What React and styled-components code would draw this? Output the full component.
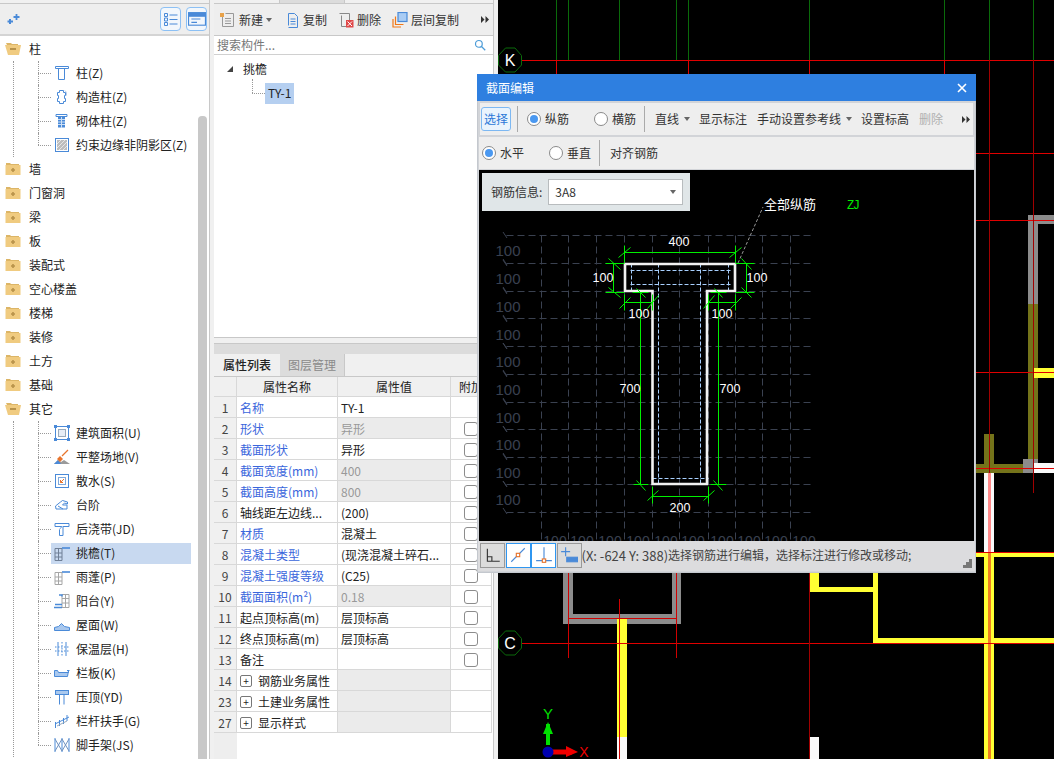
import React from "react";
import styled, { createGlobalStyle } from "styled-components";

const GlobalStyle = createGlobalStyle`
  html, body {
    margin: 0;
    padding: 0;
    background: #f0f0f0;
  }
  * {
    box-sizing: border-box;
  }
`;

const BLUE = "#4a8ad8";
const FONT = `"Noto Sans CJK SC", "Liberation Sans", sans-serif`;

const Page = styled.div`
  position: relative;
  display: flex;
  width: 1054px;
  height: 759px;
  overflow: hidden;
  background: #f0f0f0;
  color: #222;
  font: 12px/1 ${FONT};
`;

/* ---------- left tree ---------- */

const TreePanel = styled.div`
  display: flex;
  flex-direction: column;
  width: 210px;
  margin-right: 4px;
  border-right: 1px solid #c8c8c8;
  background: #fff;
`;

const TreeTop = styled.div`
  height: 4px;
  flex: none;
  background: #f0f0f0;
  border-bottom: 1px solid #c8c8c8;
`;

const TreeBar = styled.div`
  display: flex;
  align-items: center;
  height: 32px;
  flex: none;
  padding: 0 2px 0 7px;
  gap: 5px;
  background: #eeeeee;
  border-bottom: 2px solid #d4d4d4;
`;

const BarSpacer = styled.div`
  flex: 1;
`;

const ModeButton = styled.div`
  display: flex;
  align-items: center;
  justify-content: center;
  width: 21px;
  height: 24px;
  border: 1px solid #8cc0f4;
  border-radius: 4px;
  background: #f2f7fc;
`;

const TreeBody = styled.div`
  display: flex;
  flex: 1;
  min-height: 0;
`;

const TreeList = styled.div`
  flex: 1;
  padding-top: 1px;
  overflow: hidden;
`;

const ScrollTrack = styled.div`
  flex: none;
  width: 9px;
  margin-right: 2px;
  padding-top: 80px;
`;

const ScrollThumb = styled.div`
  height: 100%;
  border-radius: 4px 4px 0 0;
  background: #c8c8c8;
`;

const FolderRow = styled.div`
  display: flex;
  align-items: center;
  height: 24px;
  padding-left: 5px;
  gap: 8px;
`;

const ChildGroup = styled.div`
  margin-left: 13px;
  border-left: 1px dotted #999;
`;

const ChildRow = styled.div`
  position: relative;
  display: flex;
  align-items: center;
  height: 24px;
  padding-left: 24px;

  &::before {
    content: "";
    position: absolute;
    left: 24px;
    top: 0;
    height: ${(p) => (p.$last ? "12px" : "24px")};
    border-left: 1px dotted #999;
  }
`;

const Connector = styled.span`
  flex: none;
  width: 13px;
  border-top: 1px dotted #999;
`;

const ChildItem = styled.div`
  display: flex;
  align-items: center;
  width: 140px;
  height: 21px;
  padding-left: 3px;
  gap: 6px;
  background: ${(p) => (p.$selected ? "#c8d9f0" : "transparent")};
`;

/* ---------- middle column ---------- */

const MiddlePanel = styled.div`
  display: flex;
  flex-direction: column;
  width: 280px;
  margin-right: 4px;
  border-right: 1px solid #c8c8c8;
`;

const ClippedTabs = styled.div`
  display: flex;
  flex: none;
  height: 4px;
  border-bottom: 1px solid #c8c8c8;
`;

const ClippedTab = styled.div`
  width: ${(p) => p.$w}px;
  background: ${(p) => p.$bg};
  border-right: 1px solid #c8c8c8;
`;

const ComponentPane = styled.div`
  display: flex;
  flex-direction: column;
  height: 334px;
  flex: none;
  background: #fff;
  border-bottom: 1px solid #c8c8c8;
`;

const ComponentBar = styled.div`
  display: flex;
  align-items: center;
  height: 32px;
  flex: none;
  padding: 0 6px;
  background: #eeeeee;
  border-bottom: 1px solid #c8c8c8;
  color: #333;
`;

const BarAction = styled.div`
  display: flex;
  align-items: center;
  flex: none;
  white-space: nowrap;
  gap: ${(p) => p.$gap ?? 3}px;
  margin-right: ${(p) => p.$mr ?? 0}px;
`;

const SearchRow = styled.div`
  display: flex;
  align-items: center;
  justify-content: space-between;
  height: 19px;
  flex: none;
  padding: 0 7px 0 3px;
  color: #777;
  border-bottom: 1px solid #d0d0d0;
`;

const ComponentTree = styled.div`
  padding: 4px 0 0 12px;
`;

const RootNode = styled.div`
  display: flex;
  align-items: center;
  height: 20px;
  gap: 9px;
`;

const LeafNode = styled.div`
  position: relative;
  display: flex;
  align-items: center;
  height: 22px;
  margin-top: 3px;
  padding-left: 26px;

  &::before {
    content: "";
    position: absolute;
    left: 26px;
    top: -3px;
    height: 14px;
    border-left: 1px dotted #999;
  }
`;

const LeafLabel = styled.span`
  display: flex;
  align-items: center;
  height: 21px;
  padding: 0 3px;
  background: #b5cff0;
`;

const PaneGap = styled.div`
  height: 5px;
  flex: none;
`;

const PaneGrip = styled.div`
  height: 11px;
  flex: none;
  background: #dcdcdc;
  border-top: 1px solid #c8c8c8;
`;

const PropsPane = styled.div`
  display: flex;
  flex: 1;
  flex-direction: column;
  min-height: 0;
  background: #fff;
`;

const TabStrip = styled.div`
  display: flex;
  height: 23px;
  flex: none;
  background: #f0f0f0;
  border-bottom: 1px solid #c8c8c8;
`;

const Tab = styled.div`
  display: flex;
  align-items: center;
  justify-content: center;
  width: ${(p) => (p.$active ? 66 : 65)}px;
  font-weight: ${(p) => (p.$active ? 500 : 400)};
  color: ${(p) => (p.$active ? "#222" : "#8a8a8a")};
  background: ${(p) => (p.$active ? "#f0f0f0" : "#dcdcdc")};
  border-right: ${(p) => (p.$active ? "none" : "1px solid #c8c8c8")};
`;

const GridRow = styled.div`
  display: grid;
  grid-template-columns: 23px 101px 113px 41px;
  height: ${(p) => (p.$head ? 20 : 21)}px;
  flex: none;
`;

const Cell = styled.div`
  display: flex;
  align-items: center;
  min-width: 0;
  padding: 1px ${(p) => (p.$center ? 0 : "3px")} 0;
  justify-content: ${(p) => (p.$center ? "center" : "flex-start")};
  border-right: 1px solid #d8d8d8;
  border-bottom: 1px solid #d8d8d8;
  white-space: nowrap;
  overflow: hidden;
  color: ${(p) => p.$color || "#222"};
  background: ${(p) => p.$bg || "#fff"};
`;

const Check = styled.span`
  width: 14px;
  height: 14px;
  border: 1px solid #8c8c8c;
  border-radius: 3px;
  background: #fff;
`;

const Expander = styled.span`
  display: inline-flex;
  align-items: center;
  justify-content: center;
  flex: none;
  width: 12px;
  height: 12px;
  margin-right: 6px;
  border: 1px solid #777;
  border-radius: 2px;
  font-size: 10px;
`;

const TableFill = styled.div`
  flex: 1;
  width: 23px;
  background: #eeeeee;
`;

/* ---------- cad view ---------- */

const CadView = styled.div`
  flex: 1;
  background: #000;
`;

const CadSvg = styled.svg`
  display: block;
`;

/* ---------- section editor dialog ---------- */

const Dialog = styled.div`
  position: absolute;
  left: 477px;
  top: 74px;
  display: flex;
  flex-direction: column;
  width: 499px;
  height: 499px;
  background: #d2d4d8;
  border: 1px solid #c4c8ce;
  border-top: none;
`;

const TitleBar = styled.div`
  display: flex;
  align-items: center;
  justify-content: space-between;
  height: 27px;
  flex: none;
  margin: 0 -1px;
  padding: 0 9px 0 9px;
  background: #2e7fe0;
  color: #fff;
`;

const DialogBar = styled.div`
  display: flex;
  align-items: center;
  height: 32px;
  flex: none;
  margin: ${(p) => (p.$first ? "2px 2px 0" : "2px 1px 1px")};
  padding-left: ${(p) => (p.$first ? 1 : 3)}px;
  background: #eeeeee;
  color: #333;
`;

const SelectButton = styled.div`
  display: flex;
  align-items: center;
  justify-content: center;
  width: 30px;
  height: 24px;
  border: 1px solid #7db8f2;
  border-radius: 3px;
  background: #eaf4fd;
  color: #2a78d8;
`;

const BarSep = styled.div`
  flex: none;
  width: 1px;
  height: 26px;
  margin: 0 ${(p) => p.$r ?? 10}px 0 ${(p) => p.$l ?? 6}px;
  background: #aaa;
`;

const RadioItem = styled.div`
  display: flex;
  align-items: center;
  flex: none;
  gap: 4px;
  width: ${(p) => p.$w}px;
`;

const Radio = styled.span`
  display: flex;
  align-items: center;
  justify-content: center;
  flex: none;
  width: 14px;
  height: 14px;
  border: 1px solid #8a8a8a;
  border-radius: 50%;
  background: #fff;

  &::after {
    content: "";
    width: 8px;
    height: 8px;
    border-radius: 50%;
    background: ${(p) => (p.$on ? "#4a98f0" : "transparent")};
  }
`;

const BarItem = styled.div`
  display: flex;
  align-items: center;
  flex: none;
  gap: 5px;
  width: ${(p) => p.$w}px;
  color: ${(p) => (p.$off ? "#b0b0b0" : "inherit")};
`;

const Caret = styled.span`
  flex: none;
  width: 0;
  height: 0;
  border: 3px solid transparent;
  border-top: 4px solid #666;
  border-bottom: none;
`;

const Sketch = styled.div`
  position: relative;
  flex: 1;
  min-height: 0;
  margin: 0 1px;
  background: #000;
  overflow: hidden;
`;

const RebarInfo = styled.div`
  position: absolute;
  left: 3px;
  top: 3px;
  display: flex;
  align-items: center;
  width: 208px;
  height: 38px;
  padding-left: 9px;
  gap: 6px;
  background: #e0e6e8;
  color: #333;
`;

const RebarSelect = styled.div`
  display: flex;
  align-items: center;
  justify-content: space-between;
  width: 135px;
  height: 26px;
  padding: 0 6px;
  background: #fff;
  border: 1px solid #b8bcbe;
`;

const StatusBar = styled.div`
  display: flex;
  align-items: center;
  position: relative;
  height: 30px;
  flex: none;
  margin-bottom: 1px;
  padding: 0 0 2px 2px;
  background: #dcdcde;
  color: #444;
  white-space: nowrap;
`;

const SnapButton = styled.div`
  display: flex;
  align-items: center;
  justify-content: center;
  flex: none;
  width: 25px;
  height: 25px;
  margin-right: ${(p) => (p.$last ? 0 : 0.5)}px;
  border: 1px solid ${(p) => (p.$on ? "#2f96f0" : "#999")};
  background: ${(p) => (p.$on ? "#fff" : "#dcdcdc")};
`;

const Coords = styled.span`
  font-size: 13px;
`;

const Grip = styled.svg`
  position: absolute;
  right: 3px;
  bottom: 3px;
`;

/* ---------- icons ---------- */

const Icon = ({ children, size = 16, fill = "none", stroke = BLUE, width = 1 }) => (
  <svg width={size} height={size} viewBox="0 0 16 16" fill={fill} stroke={stroke} strokeWidth={width} style={{ flex: "none" }}>
    {children}
  </svg>
);

const FolderIcon = ({ open }) => (
  <svg width="16" height="14" viewBox="0 0 16 14" style={{ flex: "none" }}>
    {open ? (
      <>
        <path d="M1 1h5l1 1h6v2H4L3 5z" fill="#dcb566" />
        <path d="M0 3h15l1 0-2 10H3z" fill="#f0cb80" />
        <rect x="5" y="6" width="6" height="2" fill="#b8924a" />
      </>
    ) : (
      <>
        <path d="M1 1h4l1 1h8v2H1z" fill="#dcb566" />
        <rect x="0.5" y="3" width="15" height="10" fill="#f0cb80" />
        <path d="M6 8h4M8 6v4" stroke="#b8924a" strokeWidth="1.6" />
      </>
    )}
  </svg>
);

const TREE_ICONS = {
  column: (
    <Icon>
      <path d="M1.5 1.5h13v2h-13zM4.5 3.5h6v11h-6z" />
    </Icon>
  ),
  constructive: (
    <Icon>
      <path d="M5.5 1.5h4v2h2v3h-1v3h1v3h-2v2h-4v-2h-2v-3h1v-3h-1v-3h2z" />
      <path d="M11 1.5l1.5 2v3" stroke="#b8cde8" />
    </Icon>
  ),
  masonry: (
    <Icon>
      <path d="M2 1.5h11v2H2z" />
      <rect x="4" y="4" width="7" height="10.5" fill="#4a8ad8" stroke="none" />
      <path d="M4 6.5h7M4 9h7M4 11.5h7M7.5 4v11" stroke="#cfe0f4" />
    </Icon>
  ),
  shaded: (
    <Icon>
      <rect x="1.5" y="1.5" width="13" height="13" />
      <rect x="3" y="3" width="10" height="10" fill="#bdbdbd" stroke="none" />
      <path d="M3 7l4-4M3 11l8-8M5 13l8-8M9 13l4-4" stroke="#e6e6e6" />
    </Icon>
  ),
  area: (
    <Icon>
      <rect x="1.5" y="1.5" width="13" height="13" />
      <rect x="4.5" y="4.5" width="7" height="7" stroke="#9ab" fill="#e6edf6" />
      <path d="M0 0h3v3H0zM13 0h3v3h-3zM0 13h3v3H0zM13 13h3v3h-3z" fill="#4a8ad8" stroke="none" />
    </Icon>
  ),
  site: (
    <Icon>
      <path d="M0 15l4-4 3 2 3-2 6 4z" fill="#9a9a9a" stroke="none" />
      <path d="M0 15l4-4 3 4z" fill="#4a8ad8" stroke="none" />
      <path d="M6 7l3 3-3 3-3-3z" fill="#e8742c" stroke="none" />
      <path d="M8 7l6-6" stroke="#e8742c" strokeWidth="1.3" />
    </Icon>
  ),
  apron: (
    <Icon>
      <rect x="1.5" y="1.5" width="13" height="13" />
      <rect x="4.5" y="4.5" width="7" height="7" stroke="#7fa9dc" />
      <path d="M10 6L6.5 9.5M6.5 7v2.5H9" stroke="#e8742c" />
    </Icon>
  ),
  steps: (
    <Icon>
      <path d="M1.5 9l5-4 2-1.5 5 1.5v2l-3-1-2 2 4.5 0v4h-11z" />
      <path d="M4 9l5 3" />
    </Icon>
  ),
  pour: (
    <Icon>
      <path d="M1 2.5h14v3H9v9H5.5v-6L8 5.5H1z" />
      <path d="M5.5 8.5L8 5.5" stroke="#a9c6ea" />
    </Icon>
  ),
  eave: (
    <Icon stroke="#6f7f96">
      <path d="M1 3.5h7v12H1zM1 8h7M1 12h7M4.500 3.500v12" />
      <path d="M8 3h8" stroke={BLUE} strokeWidth="1.6" />
    </Icon>
  ),
  canopy: (
    <Icon stroke="#a6a6a6">
      <path d="M1 3.5h7v12H1zM1 8h7M1 12h7M4.500 3.500v12" />
      <path d="M8 3h8" stroke={BLUE} strokeWidth="1.6" />
    </Icon>
  ),
  balcony: (
    <Icon stroke="#a6a6a6">
      <path d="M8 1.5h7v13H8zM8 5.5h7M8 10h7M11.5 1.5v13" />
      <path d="M5 2h3v1.5M0 14.5h8M1 11.5h7" stroke={BLUE} strokeWidth="1.4" />
    </Icon>
  ),
  roof: (
    <Icon>
      <path d="M0.5 13.5v-3l4-1 3-3 3 3 5 1v3z" fill="#a9c8ee" />
    </Icon>
  ),
  insulation: (
    <Icon>
      <path d="M4 1v14M12 1v14" />
      <path d="M8 1v14M1 6h14M1 10h14" strokeDasharray="1.5 1.5" />
    </Icon>
  ),
  parapet: (
    <Icon>
      <path d="M0.5 5.5h3l1 2h10v-2l-1 6h-13z" fill="#a9c8ee" />
      <path d="M13 5.5h2.5" />
    </Icon>
  ),
  coping: (
    <Icon>
      <rect x="1.5" y="1.5" width="13" height="4" fill="#a9c8ee" />
      <path d="M5.5 5.5v10M10 5.5v10" />
    </Icon>
  ),
  railing: (
    <Icon>
      <path d="M1 11l14-7M1.5 9v6M5.5 7v6M9.5 5v6M13 2v6" />
      <path d="M3 13l10-5" stroke="#9ab" />
    </Icon>
  ),
  scaffold: (
    <Icon>
      <path d="M1 1v14M15 1v14M8 1v14" />
      <path d="M1 2l7 12M8 2l7 12M8 2L1 14M15 2L8 14" stroke="#6f92c0" />
    </Icon>
  ),
};

const TREE = [
  {
    name: "柱",
    items: [
      ["column", "柱(Z)"],
      ["constructive", "构造柱(Z)"],
      ["masonry", "砌体柱(Z)"],
      ["shaded", "约束边缘非阴影区(Z)"],
    ],
  },
  { name: "墙" },
  { name: "门窗洞" },
  { name: "梁" },
  { name: "板" },
  { name: "装配式" },
  { name: "空心楼盖" },
  { name: "楼梯" },
  { name: "装修" },
  { name: "土方" },
  { name: "基础" },
  {
    name: "其它",
    items: [
      ["area", "建筑面积(U)"],
      ["site", "平整场地(V)"],
      ["apron", "散水(S)"],
      ["steps", "台阶"],
      ["pour", "后浇带(JD)"],
      ["eave", "挑檐(T)", true],
      ["canopy", "雨蓬(P)"],
      ["balcony", "阳台(Y)"],
      ["roof", "屋面(W)"],
      ["insulation", "保温层(H)"],
      ["parapet", "栏板(K)"],
      ["coping", "压顶(YD)"],
      ["railing", "栏杆扶手(G)"],
      ["scaffold", "脚手架(JS)"],
    ],
  },
];

const PROPS = [
  { n: 1, name: "名称", value: "TY-1", blue: true, noCheck: true },
  { n: 2, name: "形状", value: "异形", blue: true, locked: true },
  { n: 3, name: "截面形状", value: "异形", blue: true },
  { n: 4, name: "截面宽度(mm)", value: "400", blue: true, locked: true },
  { n: 5, name: "截面高度(mm)", value: "800", blue: true, locked: true },
  { n: 6, name: "轴线距左边线...", value: "(200)" },
  { n: 7, name: "材质", value: "混凝土", blue: true },
  { n: 8, name: "混凝土类型", value: "(现浇混凝土碎石...", blue: true },
  { n: 9, name: "混凝土强度等级", value: "(C25)", blue: true },
  { n: 10, name: "截面面积(m²)", value: "0.18", blue: true, locked: true },
  { n: 11, name: "起点顶标高(m)", value: "层顶标高" },
  { n: 12, name: "终点顶标高(m)", value: "层顶标高" },
  { n: 13, name: "备注", value: "" },
  { n: 14, name: "钢筋业务属性", group: true },
  { n: 23, name: "土建业务属性", group: true },
  { n: 27, name: "显示样式", group: true },
];

/* ---------- cad drawings ---------- */

const RED = "#e00000";
const DARK_RED = "#a00000";
const CAD_GREEN = "#0a6a0a";

const AxisBubble = ({ cx, cy, label }) => (
  <g>
    <polygon
      points={`${cx - 11.5},${cy - 4.5} ${cx - 4.5},${cy - 12} ${cx + 5},${cy - 12} ${cx + 11.5},${cy - 4.5} ${cx + 11.5},${cy + 5} ${cx + 5},${cy + 12} ${cx - 4.5},${cy + 12} ${cx - 11.5},${cy + 5}`}
      fill="none"
      stroke={CAD_GREEN}
    />
    <text x={cx} y={cy + 6} fill="#fff" fontSize="16" textAnchor="middle" fontFamily="Liberation Sans, sans-serif">
      {label}
    </text>
  </g>
);

const Wall = ({ x, y, w, h, fill }) => <rect x={x} y={y} width={w} height={h} fill={fill} />;

const GREY = "#8c8c8c";
const OLIVE = "#74731a";
const YELLOW = "#ffff33";

const CadDrawing = () => (
  <CadSvg width="556" height="759" viewBox="498 0 556 759" shapeRendering="crispEdges">
    {/* green axis stubs above the K line */}
    {[556, 568, 619, 676, 688, 809, 944, 989, 1033].map((x) => (
      <path key={x} d={`M${x + 0.5} 0V60`} stroke={CAD_GREEN} />
    ))}

    {/* walls, right side */}
    <Wall x={1028} y={215} w={26} h={9} fill={GREY} />
    <Wall x={1028} y={215} w={10} h={89} fill={GREY} />
    <Wall x={1028} y={304} w={10} h={155} fill={OLIVE} />
    <Wall x={984} y={434} w={10} h={30} fill={OLIVE} />
    <Wall x={976} y={464} w={47} h={9} fill={OLIVE} />
    <Wall x={1023} y={459} w={15} h={14} fill={GREY} />
    <Wall x={1034} y={368} w={20} h={10} fill={YELLOW} />
    <Wall x={1034} y={463} w={20} h={10} fill="#fafafa" />
    <Wall x={984} y={473} w={10} h={80} fill="#fafafa" />
    <Wall x={988} y={473} w={3} h={80} fill="#ff8a8a" />

    {/* yellow walls, bottom right */}
    <Wall x={976} y={553} w={78} h={4} fill={YELLOW} />
    <Wall x={984} y={553} w={10} h={206} fill={YELLOW} />
    <Wall x={988} y={553} w={3} h={206} fill="#f08020" />
    <Wall x={809} y={573} w={10} h={18} fill={YELLOW} />
    <Wall x={809} y={587} w={66} h={5} fill={YELLOW} />
    <Wall x={873} y={573} w={5} h={70} fill={YELLOW} />
    <Wall x={873} y={638} w={111} h={5} fill={YELLOW} />
    <Wall x={994} y={638} w={60} h={5} fill={YELLOW} />
    <Wall x={809} y={737} w={10} h={22} fill="#fafafa" />

    {/* grey U and the wall below */}
    <Wall x={563} y={570} w={10} h={54} fill={GREY} />
    <Wall x={672} y={570} w={9} h={54} fill={GREY} />
    <Wall x={563} y={614} w={118} h={10} fill={GREY} />
    <Wall x={617} y={619} w={10} h={118} fill={YELLOW} />
    <Wall x={617} y={737} w={10} h={22} fill="#fafafa" />

    {/* red axes */}
    <path d="M522 60.5H1054M976 153.5H1054M976 220.5H1054M976 372.500H1054M976 468.500H1054M976 552.500H1054M522 643.500H1054" stroke={RED} />
    <path d="M556.500 60V74M688.500 60V74M809.500 60V74M944.500 60V74" stroke={RED} />
    <path d="M989.500 60V473M1033.500 60V493M809.500 573V759" stroke={DARK_RED} />
    <path d="M568.500 570V658M676.500 570V658M568 618.500H676M619.500 599V759" stroke="#d00000" />

    <g shapeRendering="auto">
      <AxisBubble cx={510} cy={60} label="K" />
      <AxisBubble cx={510} cy={643} label="C" />

      {/* coordinate axes */}
      <path d="M548 745V724" stroke="#00e000" strokeWidth="4" />
      <path d="M543 734L548 722L553 734Z" fill="#00e000" />
      <path d="M550 752H572" stroke="#f00000" strokeWidth="5" />
      <path d="M566 746L578 752L566 757Z" fill="#f00000" />
      <circle cx="548" cy="752" r="5.5" fill="#0000b0" />
      <text x="548" y="719" fill="#00e000" fontSize="15" textAnchor="middle" fontFamily="Liberation Sans, sans-serif">
        Y
      </text>
      <text x="584" y="757" fill="#f00000" fontSize="14" textAnchor="middle" fontFamily="Liberation Sans, sans-serif">
        X
      </text>
    </g>
  </CadSvg>
);

const GRID_Y = [235, 263, 291, 318, 346, 374, 402, 429, 457, 484, 512];
const GRID_X = [541, 568, 596, 624, 652, 679, 708, 735, 762, 790];
const LEFT_LABELS = [251, 279, 307, 335, 362, 390, 418, 445, 473, 500];
const GREEN = "#00f000";

// dimension lines as [x1, y1, x2, y2]
const DIMS = [
  [624, 252, 735, 252], [624, 245, 624, 262], [735, 245, 735, 262],
  [618, 257, 630, 247], [729, 257, 741, 247],
  [613, 263, 613, 292], [605, 263, 624, 263], [605, 292, 624, 292],
  [608, 258, 620, 269], [608, 287, 620, 297],
  [746, 263, 746, 292], [735, 263, 754, 263], [735, 292, 754, 292],
  [741, 258, 751, 269], [741, 287, 751, 297],
  [624, 302, 652, 302], [624, 294, 624, 310], [652, 294, 652, 310],
  [619, 308, 630, 297], [647, 308, 658, 295],
  [708, 302, 735, 302], [708, 294, 708, 310], [735, 294, 735, 310],
  [703, 308, 714, 295], [730, 308, 741, 297],
  [640, 292, 640, 484], [632, 292, 648, 292], [633, 484, 648, 484],
  [636, 288, 645, 297], [636, 480, 645, 490],
  [718, 292, 718, 484], [710, 292, 726, 292], [710, 484, 726, 484],
  [714, 288, 722, 297], [713, 480, 722, 490],
  [652, 496, 708, 496], [652, 486, 652, 503], [708, 486, 708, 503],
  [647, 500, 658, 490], [703, 500, 714, 490],
];

const DIM_LABELS = [
  ["400", 679, 246],
  ["100", 603, 282],
  ["100", 757, 282],
  ["100", 639, 318],
  ["100", 722, 318],
  ["700", 630, 393],
  ["700", 730, 393],
  ["200", 680, 512],
];

const SectionDrawing = () => (
  <svg width="495" height="371" viewBox="479 170 495 371" style={{ display: "block" }} fontFamily="Liberation Sans, sans-serif">
    <g transform="translate(0.5 0.5)">
      {GRID_Y.map((y) => (
        <path key={y} d={`M506 ${y}H814`} stroke="#3a4150" strokeDasharray="7 4" />
      ))}
      {GRID_X.map((x) => (
        <path key={x} d={`M${x} 235V541`} stroke="#3a4150" strokeDasharray="7 4" />
      ))}
    </g>
    {LEFT_LABELS.map((y) => (
      <g key={y}>
        <text x="508" y={y + 5} fill="#3a4150" fontSize="15" textAnchor="middle">
          100
        </text>
        <path d={`M503 ${y - 19}L507 ${y - 13}M503 ${y + 8}L507 ${y + 14}`} stroke="#3a4150" />
      </g>
    ))}
    {GRID_X.map((x) => (
      <text key={x} x={x + 14} y="546" fill="#3a4150" fontSize="14" textAnchor="middle">
        100
      </text>
    ))}

    {/* rebar outline */}
    <path
      transform="translate(0.5 0.5)"
      d="M658 263V484M700 263V484M631 263V292M728 263V292M630 270H731M630 284H731M652 478H708"
      stroke="#a8d0ff"
      strokeDasharray="4 2"
      fill="none"
    />
    {/* T section */}
    <path d="M625 264H735V291H707V484H652.5V291H625Z" fill="none" stroke="#f2f2f2" strokeWidth="2.6" />

    <g transform="translate(0.5 0.5)">
      {DIMS.map(([x1, y1, x2, y2]) => (
        <line key={`${x1}-${y1}-${x2}-${y2}`} x1={x1} y1={y1} x2={x2} y2={y2} stroke={GREEN} />
      ))}
    </g>
    {DIM_LABELS.map(([t, x, y]) => (
      <text key={`${x}-${y}`} x={x} y={y} fill="#fff" fontSize="12.5" textAnchor="middle">
        {t}
      </text>
    ))}

    <path d="M738 263L763 207" stroke="#999" strokeDasharray="3 2" />
    <text x="764" y="209" fill="#fff" fontSize="13" fontFamily={FONT}>
      全部纵筋
    </text>
    <text x="847" y="209" fill={GREEN} fontSize="12" fontFamily="Liberation Mono, monospace" textLength="13">
      ZJ
    </text>
  </svg>
);

const FastForward = () => (
  <svg width="8" height="7" viewBox="0 0 8 7" style={{ flex: "none" }}>
    <path d="M0 0l3.500 3.500L0 7zM4.500 0L8 3.500 4.500 7z" fill="#333" />
  </svg>
);

/* ---------- app ---------- */

const App = () => (
  <Page>
    <GlobalStyle />

    <TreePanel>
      <TreeTop />
      <TreeBar>
        <svg width="13" height="11" viewBox="0 0 13 11">
          <path d="M3 5v5M0.5 7.5h5.500" stroke={BLUE} strokeWidth="2" />
          <path d="M9.500 0v6M6.500 3h6" stroke={BLUE} strokeWidth="1.800" />
        </svg>
        <BarSpacer />
        <ModeButton>
          <Icon size={16}>
            <path d="M1.500 2.500h3v3h-3zM1.500 7h3v3h-3zM1.500 11.500h3v3h-3zM6.500 4h8M6.500 8.500h8M6.500 13h8" />
          </Icon>
        </ModeButton>
        <ModeButton>
          <Icon size={18}>
            <rect x="0.500" y="2.500" width="15" height="11" />
            <rect x="0.500" y="2.500" width="15" height="3" fill={BLUE} />
            <path d="M3 8h8M3 11h5" />
          </Icon>
        </ModeButton>
      </TreeBar>
      <TreeBody>
        <TreeList>
          {TREE.map((folder) => (
            <React.Fragment key={folder.name}>
              <FolderRow>
                <FolderIcon open={!!folder.items} />
                {folder.name}
              </FolderRow>
              {folder.items && (
                <ChildGroup>
                  {folder.items.map(([icon, label, selected], i) => (
                    <ChildRow key={label} $last={i === folder.items.length - 1}>
                      <Connector />
                      <ChildItem $selected={selected}>
                        {TREE_ICONS[icon]}
                        {label}
                      </ChildItem>
                    </ChildRow>
                  ))}
                </ChildGroup>
              )}
            </React.Fragment>
          ))}
        </TreeList>
        <ScrollTrack>
          <ScrollThumb />
        </ScrollTrack>
      </TreeBody>
    </TreePanel>

    <MiddlePanel>
      <ClippedTabs>
        <ClippedTab $w={66} $bg="#f0f0f0" />
        <ClippedTab $w={65} $bg="#dcdcdc" />
      </ClippedTabs>
      <ComponentPane>
        <ComponentBar>
          <BarAction $mr={13}>
            <Icon stroke="#999" width={1}>
              <path d="M2.500 3.500v11h11v-13h-8M5 6.500h6M5 9h6M5 11.500h6" />
              <path d="M0 1h4v4H0z" fill="#e8a24a" stroke="none" />
            </Icon>
            新建
            <Caret />
          </BarAction>
          <BarAction $mr={11} $gap={2}>
            <Icon>
              <path d="M3.500 1.500v12M3.500 1.500h6l3 3v11h-9M5.500 7h5M5.500 9.500h5M5.500 12h5" />
            </Icon>
            复制
          </BarAction>
          <BarAction $mr={11}>
            <Icon stroke="#888">
              <path d="M1.500 1.500h10v9M3.500 3.500v11h6" />
              <rect x="8" y="8" width="7.500" height="7.500" fill="#e04848" stroke="none" />
              <path d="M9.500 9.500l4.500 4.500M14 9.500L9.500 14" stroke="#fff" />
            </Icon>
            删除
          </BarAction>
          <BarAction $mr={22}>
            <Icon stroke="#f07818" width={1.200}>
              <path d="M1 7v8h8M3.500 4.500v8h8" />
              <rect x="6" y="0.500" width="9" height="9" fill="#a9ccf4" stroke={BLUE} />
            </Icon>
            层间复制
          </BarAction>
          <FastForward />
        </ComponentBar>
        <SearchRow>
          搜索构件...
          <Icon size={12} width={1.600} stroke="#4d9cd8">
            <circle cx="6.500" cy="6.500" r="4.500" />
            <path d="M10 10l5 5" />
          </Icon>
        </SearchRow>
        <ComponentTree>
          <RootNode>
            <svg width="8" height="8" viewBox="0 0 8 8">
              <path d="M7 1v6H1z" fill="#444" />
            </svg>
            挑檐
          </RootNode>
          <LeafNode>
            <Connector />
            <LeafLabel>TY-1</LeafLabel>
          </LeafNode>
        </ComponentTree>
      </ComponentPane>
      <PaneGap />
      <PaneGrip />
      <PropsPane>
        <TabStrip>
          <Tab $active>属性列表</Tab>
          <Tab>图层管理</Tab>
        </TabStrip>
        <GridRow $head>
          <Cell $bg="#f0f0f0" />
          <Cell $bg="#f0f0f0" $center>属性名称</Cell>
          <Cell $bg="#f0f0f0" $center>属性值</Cell>
          <Cell $bg="#f0f0f0" $center>附加</Cell>
        </GridRow>
        {PROPS.map((row) => (
          <GridRow key={row.n}>
            <Cell $bg="#f0f0f0" $center $color="#444">{row.n}</Cell>
            <Cell $color={row.blue ? "#3a66dc" : "#222"}>
              {row.group && <Expander>+</Expander>}
              {row.name}
            </Cell>
            <Cell $bg={row.locked || row.group ? "#ebebeb" : "#fff"} $color={row.locked ? "#999" : "#222"}>
              {row.value}
            </Cell>
            <Cell $center>{!row.noCheck && !row.group && <Check />}</Cell>
          </GridRow>
        ))}
        <TableFill />
      </PropsPane>
    </MiddlePanel>

    <CadView>
      <CadDrawing />
    </CadView>

    <Dialog>
      <TitleBar>
        截面编辑
        <svg width="10" height="10" viewBox="0 0 10 10">
          <path d="M1 1l8 8M9 1l-8 8" stroke="#fff" strokeWidth="1.600" />
        </svg>
      </TitleBar>
      <DialogBar $first>
        <SelectButton>选择</SelectButton>
        <BarSep $r={9} />
        <RadioItem $w={67}>
          <Radio $on />
          纵筋
        </RadioItem>
        <RadioItem $w={50}>
          <Radio />
          横筋
        </RadioItem>
        <BarSep $l={0} />
        <BarItem $w={44}>
          直线
          <Caret />
        </BarItem>
        <BarItem $w={58}>显示标注</BarItem>
        <BarItem $w={104}>
          手动设置参考线
          <Caret />
        </BarItem>
        <BarItem $w={58}>设置标高</BarItem>
        <BarItem $w={43} $off>删除</BarItem>
        <FastForward />
      </DialogBar>
      <DialogBar>
        <RadioItem $w={67}>
          <Radio $on />
          水平
        </RadioItem>
        <RadioItem $w={50}>
          <Radio />
          垂直
        </RadioItem>
        <BarSep $l={0} />
        对齐钢筋
      </DialogBar>
      <Sketch>
        <SectionDrawing />
        <RebarInfo>
          钢筋信息:
          <RebarSelect>
            3A8
            <Caret />
          </RebarSelect>
        </RebarInfo>
      </Sketch>
      <StatusBar>
        <SnapButton>
          <Icon stroke="#333" size={18}>
            <path d="M3 2.500v11h11M3 9.500h4v4" />
          </Icon>
        </SnapButton>
        <SnapButton $on>
          <Icon size={18}>
            <path d="M2 14L14 2" />
            <rect x="6.500" y="6.500" width="3" height="3" fill="#fff" stroke="#e8742c" />
          </Icon>
        </SnapButton>
        <SnapButton $on>
          <Icon size={18}>
            <path d="M8 1v12M1 13h14" />
            <rect x="6.500" y="11.500" width="3" height="3" fill="#fff" stroke="#e8742c" />
          </Icon>
        </SnapButton>
        <SnapButton $last>
          <Icon size={18}>
            <path d="M5 1v8M1 5h8" />
            <rect x="6" y="10" width="10" height="4" fill={BLUE} />
          </Icon>
        </SnapButton>
        <Coords>(X: -624 Y: 388)</Coords>选择钢筋进行编辑，选择标注进行修改或移动;
        <Grip width="9" height="9" viewBox="0 0 9 9">
          <path d="M6 0h3v3H6zM3 3h3v3H3zM6 3h3v3H6zM0 6h3v3H0zM3 6h3v3H3zM6 6h3v3H6z" fill="#777" />
        </Grip>
      </StatusBar>
    </Dialog>
  </Page>
);

export default App;
